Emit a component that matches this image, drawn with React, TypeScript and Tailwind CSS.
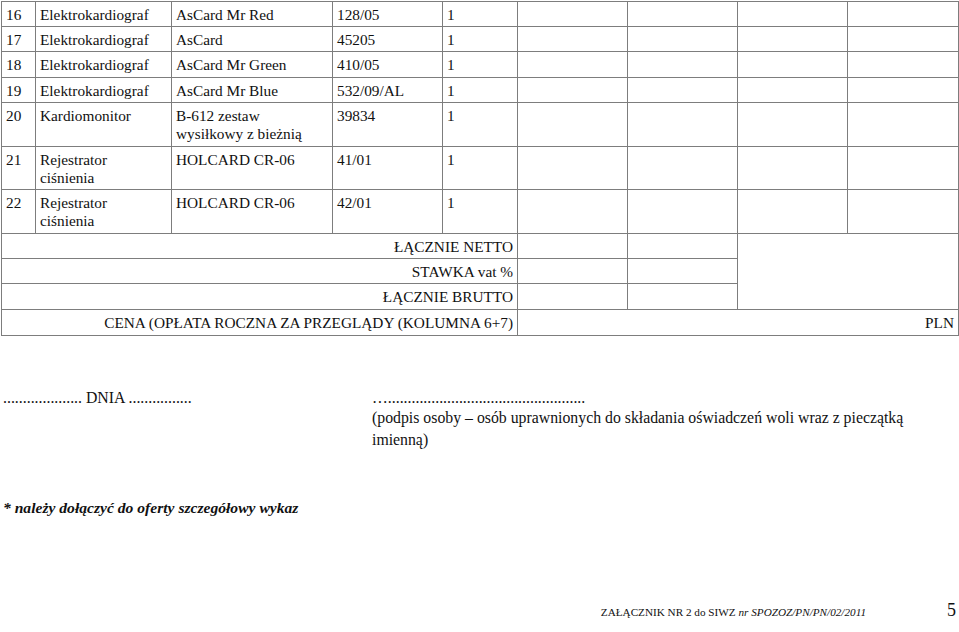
import React from "react";

const cell = "border border-[#7d7d7d] px-[4px] pt-[4px] align-top text-left font-normal";

const rows: { h: string; c: React.ReactNode[] }[] = [
  { h: "h-[25px]", c: ["16", "Elektrokardiograf", "AsCard Mr Red", "128/05", "1"] },
  { h: "h-[25px]", c: ["17", "Elektrokardiograf", "AsCard", "45205", "1"] },
  { h: "h-[26px]", c: ["18", "Elektrokardiograf", "AsCard Mr Green", "410/05", "1"] },
  { h: "h-[25px]", c: ["19", "Elektrokardiograf", "AsCard Mr Blue", "532/09/AL", "1"] },
  {
    h: "h-[44px]",
    c: ["20", "Kardiomonitor", <>B-612 zestaw<br />wysiłkowy z bieżnią</>, "39834", "1"],
  },
  {
    h: "h-[43px]",
    c: ["21", <>Rejestrator<br />ciśnienia</>, "HOLCARD CR-06", "41/01", "1"],
  },
  {
    h: "h-[44px]",
    c: ["22", <>Rejestrator<br />ciśnienia</>, "HOLCARD CR-06", "42/01", "1"],
  },
];

export default function App() {
  return (
    <div
      className="relative w-[959px] h-[632px] bg-white text-[#111] overflow-hidden"
      style={{ fontFamily: '"Liberation Serif", "Times New Roman", serif' }}
    >
      <div className="pl-px pt-px">
        <table className="border-collapse table-fixed w-[957px] text-[15.3px] leading-[18px]">
          <colgroup>
            <col className="w-[34px]" />
            <col className="w-[136px]" />
            <col className="w-[161px]" />
            <col className="w-[110px]" />
            <col className="w-[75px]" />
            <col className="w-[110px]" />
            <col className="w-[110px]" />
            <col className="w-[110px]" />
            <col className="w-[111px]" />
          </colgroup>
          <tbody>
            {rows.map((r, i) => (
              <tr key={i} className={r.h}>
                {r.c.map((t, j) => (
                  <td key={j} className={cell}>
                    {t}
                  </td>
                ))}
                <td className={cell}></td>
                <td className={cell}></td>
                <td className={cell}></td>
                <td className={cell}></td>
              </tr>
            ))}
            <tr className="h-[25px]">
              <td colSpan={5} className={cell + " !text-right"}>ŁĄCZNIE NETTO</td>
              <td className={cell}></td>
              <td className={cell}></td>
              <td rowSpan={3} colSpan={2} className={cell}></td>
            </tr>
            <tr className="h-[25px]">
              <td colSpan={5} className={cell + " !text-right"}>STAWKA vat %</td>
              <td className={cell}></td>
              <td className={cell}></td>
            </tr>
            <tr className="h-[26px]">
              <td colSpan={5} className={cell + " !text-right"}>ŁĄCZNIE BRUTTO</td>
              <td className={cell}></td>
              <td className={cell}></td>
            </tr>
            <tr className="h-[26px]">
              <td colSpan={5} className={cell + " !text-right"}>
                CENA (OPŁATA ROCZNA ZA PRZEGLĄDY (KOLUMNA 6+7)
              </td>
              <td colSpan={4} className={cell + " !text-right"}>PLN</td>
            </tr>
          </tbody>
        </table>
      </div>

      <div className="mt-[53px] flex text-[15.8px] leading-[18px]">
        <div className="w-[372px] pl-[3px]">....................&nbsp;DNIA ................</div>
        <div className="flex-1">
          <div>…..................................................</div>
          <p className="leading-[22px] w-[540px]">
            (podpis osoby – osób uprawnionych do składania oświadczeń woli wraz z pieczątką imienną)
          </p>
        </div>
      </div>

      <div className="mt-[47px] pl-[3px] text-[15.6px] leading-[20px] font-bold italic">
        * należy dołączyć do oferty szczegółowy wykaz
      </div>

      <div className="absolute left-0 right-0 bottom-[8px] flex items-baseline justify-end pr-[3px]">
        <span className="text-[11.2px]">
          ZAŁĄCZNIK NR 2 do SIWZ <span className="italic">nr SPOZOZ/PN/PN/02/2011</span>
        </span>
        <span className="ml-[81px] text-[18px]">5</span>
      </div>
    </div>
  );
}
